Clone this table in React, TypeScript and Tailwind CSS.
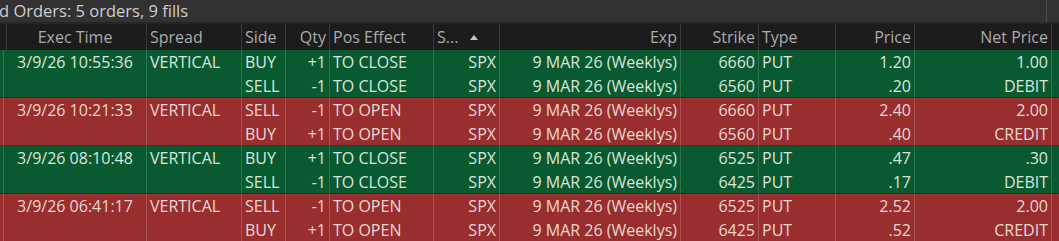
import React from 'react';

type Leg = { side: string; qty: string; pos: string; sym: string; exp: string; strike: string; type: string; price: string };
type Order = { time: string; spread: string; legs: Leg[]; net: [string, string]; tone: 'green' | 'red' };

const orders: Order[] = [
  {
    time: '3/9/26 10:55:36',
    spread: 'VERTICAL',
    tone: 'green',
    net: ['1.00', 'DEBIT'],
    legs: [
      { side: 'BUY', qty: '+1', pos: 'TO CLOSE', sym: 'SPX', exp: '9 MAR 26 (Weeklys)', strike: '6660', type: 'PUT', price: '1.20' },
      { side: 'SELL', qty: '-1', pos: 'TO CLOSE', sym: 'SPX', exp: '9 MAR 26 (Weeklys)', strike: '6560', type: 'PUT', price: '.20' },
    ],
  },
  {
    time: '3/9/26 10:21:33',
    spread: 'VERTICAL',
    tone: 'red',
    net: ['2.00', 'CREDIT'],
    legs: [
      { side: 'SELL', qty: '-1', pos: 'TO OPEN', sym: 'SPX', exp: '9 MAR 26 (Weeklys)', strike: '6660', type: 'PUT', price: '2.40' },
      { side: 'BUY', qty: '+1', pos: 'TO OPEN', sym: 'SPX', exp: '9 MAR 26 (Weeklys)', strike: '6560', type: 'PUT', price: '.40' },
    ],
  },
  {
    time: '3/9/26 08:10:48',
    spread: 'VERTICAL',
    tone: 'green',
    net: ['.30', 'DEBIT'],
    legs: [
      { side: 'BUY', qty: '+1', pos: 'TO CLOSE', sym: 'SPX', exp: '9 MAR 26 (Weeklys)', strike: '6525', type: 'PUT', price: '.47' },
      { side: 'SELL', qty: '-1', pos: 'TO CLOSE', sym: 'SPX', exp: '9 MAR 26 (Weeklys)', strike: '6425', type: 'PUT', price: '.17' },
    ],
  },
  {
    time: '3/9/26 06:41:17',
    spread: 'VERTICAL',
    tone: 'red',
    net: ['2.00', 'CREDIT'],
    legs: [
      { side: 'SELL', qty: '-1', pos: 'TO OPEN', sym: 'SPX', exp: '9 MAR 26 (Weeklys)', strike: '6525', type: 'PUT', price: '2.52' },
      { side: 'BUY', qty: '+1', pos: 'TO OPEN', sym: 'SPX', exp: '9 MAR 26 (Weeklys)', strike: '6425', type: 'PUT', price: '.52' },
    ],
  },
];

const cols = 'grid grid-cols-[4px_143px_95px_44px_44px_104px_66px_181px_78px_77px_79px_137px_1fr]';

const Head = ({ children, align = 'left' }: { children?: React.ReactNode; align?: 'left' | 'right' | 'center' }) => (
  <div
    className={`flex h-full items-center border-r border-[#3a3a3a] px-[3px] whitespace-nowrap ${
      align === 'right' ? 'justify-end' : align === 'center' ? 'justify-center' : 'justify-start'
    }`}
  >
    {children}
  </div>
);

const Cell = ({ lines, align = 'left', line }: { lines: string[]; align?: 'left' | 'right' | 'center'; line: string }) => (
  <div className={`flex flex-col border-r ${line}`}>
    {lines.map((t, i) => (
      <div
        key={i}
        className={`flex items-center px-[3px] whitespace-nowrap ${i === 0 ? 'h-6' : 'h-[23px]'} ${
          align === 'right' ? 'justify-end' : align === 'center' ? 'justify-center' : 'justify-start'
        }`}
      >
        {t}
      </div>
    ))}
  </div>
);

export default function App() {
  return (
    <div className="h-[241px] w-[1059px] overflow-hidden bg-[#1d1d1d] font-['Open_Sans',sans-serif] text-[16px] leading-none">
      <div className="flex h-[24px] items-center overflow-hidden border-b-2 border-[#262626] bg-[#323232] text-[#cfcfcf]">
        <div className="-ml-[1px] flex-1 whitespace-nowrap text-[16.5px]">d Orders: 5 orders, 9 fills</div>
        <div className="h-full w-[13px] border-l border-[#4a4a4a]" />
      </div>

      <div className={`${cols} h-[26px] bg-[#1c1c1c] text-[#ababab]`}>
        <Head />
        <Head align="center">Exec Time</Head>
        <Head>Spread</Head>
        <Head>Side</Head>
        <Head align="right">Qty</Head>
        <Head>Pos Effect</Head>
        <Head>
          <span>S...</span>
          <svg width="8" height="5" viewBox="0 0 8 5" className="ml-[12px]">
            <path d="M0 5 L4 0 L8 5 Z" fill="#c8c8c8" />
          </svg>
        </Head>
        <Head align="right">Exp</Head>
        <Head align="right">Strike</Head>
        <Head>Type</Head>
        <Head align="right">Price</Head>
        <Head align="right">Net Price</Head>
        <div />
      </div>

      {orders.map((o, i) => {
        const bg = o.tone === 'green' ? 'bg-[#0a5a31] text-[#d9e6dc]' : 'bg-[#992e2e] text-[#ecd6d3]';
        const line = o.tone === 'green' ? 'border-[#2b7650]' : 'border-[#ad5252]';
        const sep = o.tone === 'green' ? 'border-[#0a3f24]' : 'border-[#6e2020]';
        return (
          <div key={i} className={`${cols} border-b ${sep} ${bg}`}>
            <Cell line={line} lines={['', '']} />
            <Cell line={line} align="center" lines={[o.time, '']} />
            <Cell line={line} lines={[o.spread, '']} />
            <Cell line={line} lines={o.legs.map((l) => l.side)} />
            <Cell line={line} align="right" lines={o.legs.map((l) => l.qty)} />
            <Cell line={line} lines={o.legs.map((l) => l.pos)} />
            <Cell line={line} align="right" lines={o.legs.map((l) => l.sym)} />
            <Cell line={line} align="right" lines={o.legs.map((l) => l.exp)} />
            <Cell line={line} align="right" lines={o.legs.map((l) => l.strike)} />
            <Cell line={line} lines={o.legs.map((l) => l.type)} />
            <Cell line={line} align="right" lines={o.legs.map((l) => l.price)} />
            <Cell line={line} align="right" lines={o.net} />
            <div />
          </div>
        );
      })}
    </div>
  );
}
